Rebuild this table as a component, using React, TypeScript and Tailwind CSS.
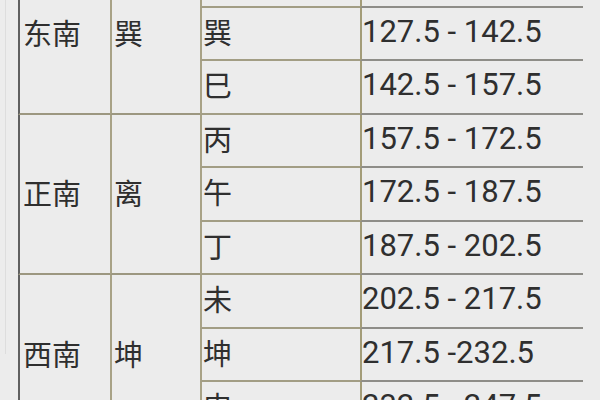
import React from 'react'

interface Group {
  dir: string
  gua: string
  rows: [string, string][]
}

const groups: Group[] = [
  {
    dir: '东南',
    gua: '巽',
    rows: [
      ['辰', '112.5 - 127.5'],
      ['巽', '127.5 - 142.5'],
      ['巳', '142.5 - 157.5'],
    ],
  },
  {
    dir: '正南',
    gua: '离',
    rows: [
      ['丙', '157.5 - 172.5'],
      ['午', '172.5 - 187.5'],
      ['丁', '187.5 - 202.5'],
    ],
  },
  {
    dir: '西南',
    gua: '坤',
    rows: [
      ['未', '202.5 - 217.5'],
      ['坤', '217.5 -232.5'],
      ['申', '232.5 - 247.5'],
    ],
  },
]

const cjk = "font-['Noto_Sans_CJK_SC',sans-serif] text-[29px] leading-none"
const num = "font-['Roboto','Noto_Sans',sans-serif] text-[31px] leading-none"

export default function App() {
  return (
    <div className="w-[600px] h-[400px] overflow-hidden bg-[#ececec] text-[#2f2f2f] pl-[5px]">
      <div className="h-full border-l border-[#dddddd] pl-[12px]">
        <div className="mt-[-46px] grid grid-cols-[92px_90px_160px_223px] auto-rows-[53.5px]">
          {groups.map((g) => (
            <React.Fragment key={g.dir}>
              <div
                className={`row-span-3 flex items-center pl-[3px] pb-[2px] border-l-2 border-l-[#606060] border-b-2 border-b-[#9c9780] ${cjk}`}
              >
                {g.dir}
              </div>
              <div
                className={`row-span-3 flex items-center pl-[2px] pb-[2px] border-l-2 border-l-[#a8a286] border-b-2 border-b-[#9c9780] ${cjk}`}
              >
                {g.gua}
              </div>
              {g.rows.map(([zhi, deg]) => (
                <React.Fragment key={zhi}>
                  <div
                    className={`flex items-center pl-[1px] pb-[4px] border-l-2 border-l-[#a8a286] border-b-2 border-b-[#a29d84] ${cjk}`}
                  >
                    {zhi}
                  </div>
                  <div
                    className={`flex items-center pl-0 pb-[4px] border-l-2 border-l-[#a39c78] border-b-2 border-b-[#8e8d88] ${num}`}
                  >
                    {deg}
                  </div>
                </React.Fragment>
              ))}
            </React.Fragment>
          ))}
        </div>
      </div>
    </div>
  )
}
